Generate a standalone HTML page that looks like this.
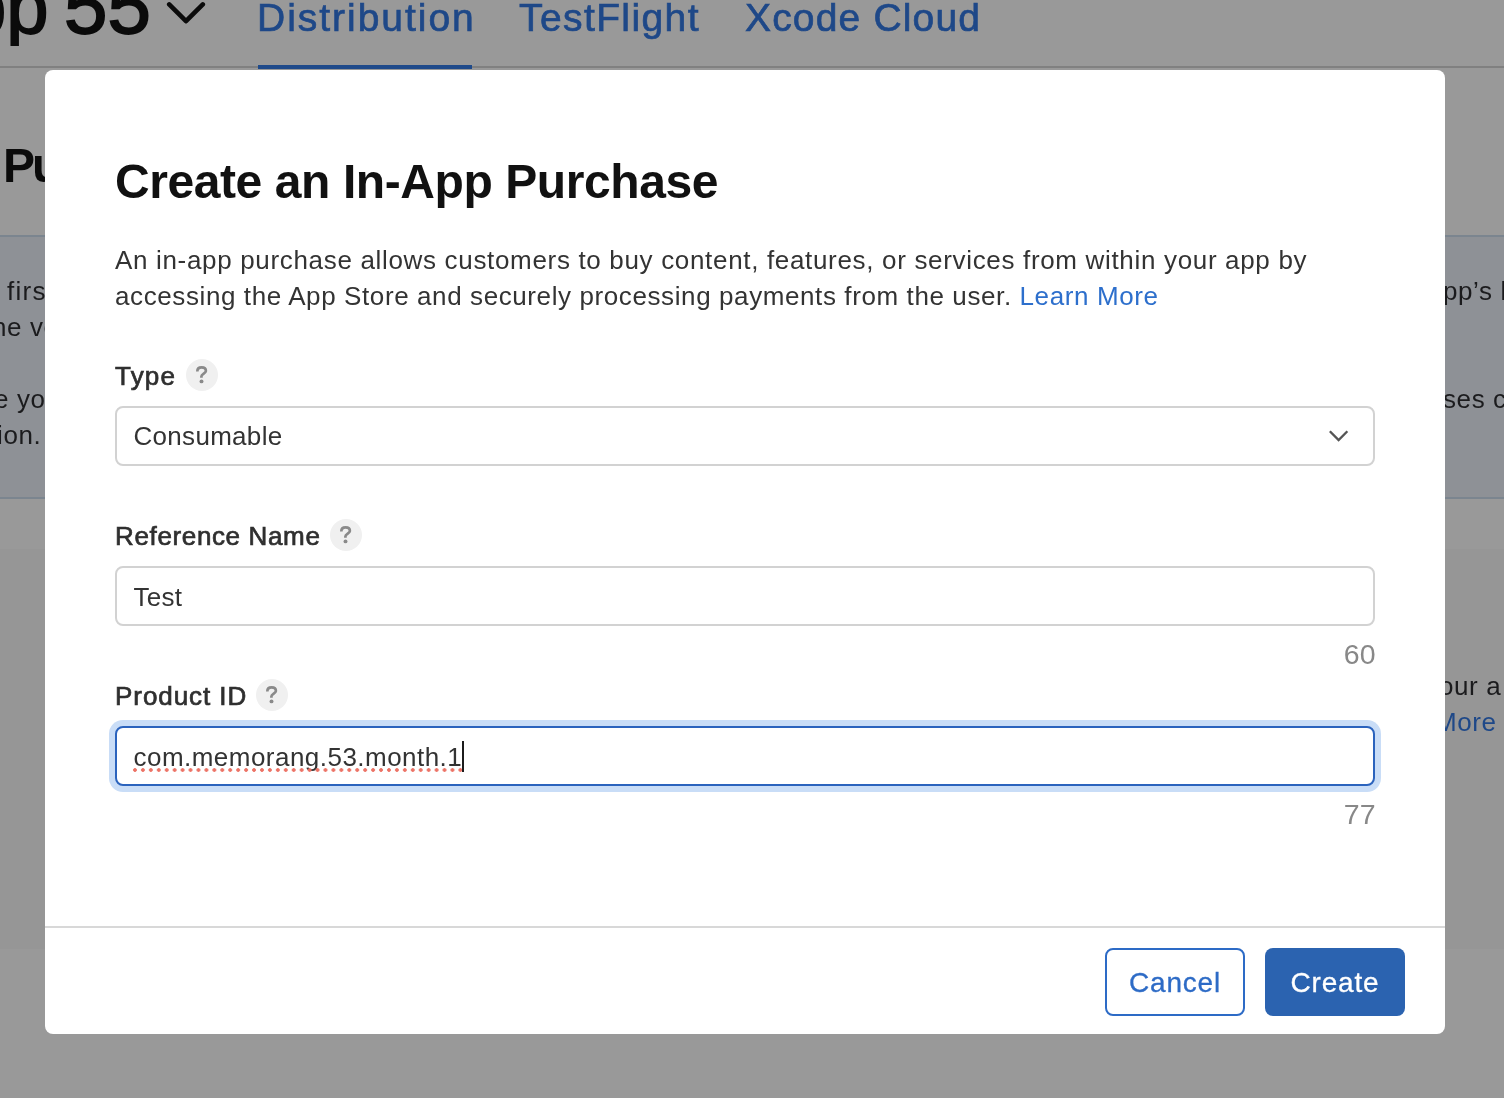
<!DOCTYPE html>
<html>
<head>
<meta charset="utf-8">
<style>
html,body{margin:0;padding:0;}
body{width:1504px;height:1098px;position:relative;overflow:hidden;background:#999999;font-family:"Liberation Sans",sans-serif;-webkit-font-smoothing:antialiased;}
#modal,.abs,.bgtxt{will-change:transform;}
.abs{position:absolute;white-space:nowrap;}
/* background page */
#hdrline{position:absolute;left:0;top:66px;width:1504px;height:2px;background:#808080;}
#info{position:absolute;left:0;top:235px;width:1504px;height:264px;background:#8e9196;border-top:2px solid #7b858f;border-bottom:2px solid #7b858f;box-sizing:border-box;}
#card{position:absolute;left:0;top:549px;width:1504px;height:400px;background:#969696;}
.bgtxt{position:absolute;white-space:nowrap;font-size:26px;line-height:36px;color:#1b1b1d;letter-spacing:0.6px;}
/* modal */
#modal{position:absolute;left:45px;top:70px;width:1400px;height:964px;background:#fff;border-radius:8px;}
.m{position:absolute;white-space:nowrap;}
.title{font-size:48px;font-weight:700;color:#111;letter-spacing:-0.42px;}
.para{font-size:26px;color:#333;letter-spacing:0.6px;line-height:36px;}
.label{font-size:26px;font-weight:400;color:#2f2f2f;-webkit-text-stroke:0.7px #2f2f2f;letter-spacing:0.5px;}
.help{position:absolute;width:32px;height:32px;border-radius:16px;background:#f0f0f0;color:#8c8c8c;font-size:22px;font-weight:400;-webkit-text-stroke:0.8px #8c8c8c;text-align:center;line-height:32px;}
.field{position:absolute;left:70px;width:1260px;height:60px;box-sizing:border-box;border:2px solid #d2d2d2;border-radius:8px;background:#fff;}
.ftxt{position:absolute;left:16.5px;font-size:26px;color:#333;letter-spacing:0.3px;}
.count{position:absolute;right:69px;font-size:28.5px;color:#888888;letter-spacing:0.3px;}
.btn{position:absolute;top:878px;width:140px;height:68px;box-sizing:border-box;border-radius:8px;font-size:28px;text-align:center;letter-spacing:0.8px;-webkit-text-stroke:0.3px currentColor;}
</style>
</head>
<body>
<!-- background page -->
<div class="abs" style="left:0;top:0;width:160px;height:46px;overflow:hidden;"><div class="abs" style="left:-36px;top:-33px;font-size:76px;font-weight:400;-webkit-text-stroke:1.8px #0b0b0b;color:#0b0b0b;line-height:80px;">pp</div><div class="abs" style="left:64px;top:-34px;font-size:78px;font-weight:400;-webkit-text-stroke:1.8px #0b0b0b;color:#0b0b0b;line-height:80px;">55</div></div>

<svg class="abs" style="left:166px;top:0px" width="40" height="26" viewBox="0 0 40 26"><path d="M3.2 4.4 L20 21.2 L36.8 4.4" fill="none" stroke="#0b0b0b" stroke-width="4.6" stroke-linecap="round" stroke-linejoin="round"/></svg>
<div class="abs" style="left:257px;top:-12px;font-size:39px;color:#1e4888;line-height:60px;letter-spacing:1.97px;-webkit-text-stroke:0.7px #1e4888;">Distribution</div>
<div class="abs" style="left:519px;top:-12px;font-size:39px;color:#1e4888;line-height:60px;letter-spacing:1.4px;-webkit-text-stroke:0.7px #1e4888;">TestFlight</div>
<div class="abs" style="left:745px;top:-12px;font-size:39px;color:#1e4888;line-height:60px;letter-spacing:1.17px;-webkit-text-stroke:0.7px #1e4888;">Xcode Cloud</div>
<div id="hdrline"></div>
<div class="abs" style="left:258px;top:65px;width:214px;height:4px;background:#1f4a8a;"></div>
<div class="abs" style="left:3px;top:131px;font-size:48px;font-weight:700;color:#0b0b0b;line-height:70px;letter-spacing:-3px;">Pu</div>
<div id="info"></div>
<div class="bgtxt" style="left:7.2px;top:273px;letter-spacing:1.3px;">firs</div>
<div class="bgtxt" style="left:-8px;top:309px;">ne ve</div>
<div class="bgtxt" style="left:-5.7px;top:381px;">e you</div>
<div class="bgtxt" style="left:-2.6px;top:417px;">ion.</div>
<div class="bgtxt" style="left:1443px;top:273px;">pp’s l</div>
<div class="bgtxt" style="left:1443px;top:381px;">ses c</div>
<div id="card"></div>
<div class="bgtxt" style="left:1439px;top:668px;">our a</div>
<div class="bgtxt" style="left:1435px;top:704px;color:#1e4888;">More</div>

<!-- modal -->
<div id="modal">
  <div class="m title" style="left:70px;top:84px;line-height:56px;">Create an In-App Purchase</div>
  <div class="m para" style="left:70px;top:172px;"><span style="letter-spacing:0.67px">An in-app purchase allows customers to buy content, features, or services from within your app by</span><br>accessing the App Store and securely processing payments from the user. <span style="color:#2d6fcc">Learn More</span></div>
  <div class="m label" style="left:70px;top:288px;line-height:36px;letter-spacing:1.2px;">Type</div>
  <div class="help" style="left:141px;top:289px;"><svg width="32" height="32" viewBox="0 0 32 32" style="display:block"><path d="M11.3 12.4 C11.3 9.6 13.3 8.4 15.6 8.4 C18.3 8.4 19.9 10.0 19.9 12.0 C19.9 14.3 15.4 14.9 15.4 17.4 L15.4 18.8" fill="none" stroke="#8a8a8a" stroke-width="2.7"/><circle cx="15.5" cy="22.4" r="1.95" fill="#8a8a8a"/></svg></div>
  <div class="field" style="top:336px;"><div class="ftxt" style="top:10px;line-height:36px;">Consumable</div>
    <svg style="position:absolute;left:1200px;top:0px" width="40" height="56" viewBox="0 0 40 56"><path d="M12.85 23.25 L21.6 32 L30.35 23.25" fill="none" stroke="#555" stroke-width="2.4" stroke-linecap="butt" stroke-linejoin="miter"/></svg>
  </div>
  <div class="m label" style="left:70px;top:448px;line-height:36px;letter-spacing:0.64px;">Reference Name</div>
  <div class="help" style="left:285px;top:449px;"><svg width="32" height="32" viewBox="0 0 32 32" style="display:block"><path d="M11.3 12.4 C11.3 9.6 13.3 8.4 15.6 8.4 C18.3 8.4 19.9 10.0 19.9 12.0 C19.9 14.3 15.4 14.9 15.4 17.4 L15.4 18.8" fill="none" stroke="#8a8a8a" stroke-width="2.7"/><circle cx="15.5" cy="22.4" r="1.95" fill="#8a8a8a"/></svg></div>
  <div class="field" style="top:496px;"><div class="ftxt" style="top:11px;line-height:36px;">Test</div></div>
  <div class="count" style="top:566px;line-height:36px;">60</div>
  <div class="m label" style="left:70px;top:608px;line-height:36px;letter-spacing:0.94px;">Product ID</div>
  <div class="help" style="left:211px;top:609px;"><svg width="32" height="32" viewBox="0 0 32 32" style="display:block"><path d="M11.3 12.4 C11.3 9.6 13.3 8.4 15.6 8.4 C18.3 8.4 19.9 10.0 19.9 12.0 C19.9 14.3 15.4 14.9 15.4 17.4 L15.4 18.8" fill="none" stroke="#8a8a8a" stroke-width="2.7"/><circle cx="15.5" cy="22.4" r="1.95" fill="#8a8a8a"/></svg></div>
  <div class="field" style="top:656px;border-color:#2b63bd;box-shadow:0 0 0 6px #c9ddf7;"><div class="ftxt" style="top:11px;line-height:36px;letter-spacing:0.47px;">com.memorang.53.month.1</div>
    <div style="position:absolute;left:14px;top:39px;width:333.5px;height:6px;background-image:radial-gradient(circle,#ec7265 1.5px,rgba(236,114,101,0) 2.2px);background-size:7.94px 6px;"></div>
    <div style="position:absolute;left:345px;top:13px;width:2px;height:31px;background:#1c1c1c;"></div>
  </div>
  <div class="count" style="top:726px;line-height:36px;">77</div>
  <div class="m" style="left:0;top:856px;width:1400px;height:2px;background:#d8d8d8;"></div>
  <div class="btn" style="left:1060px;border:2px solid #2d6bc6;color:#2d6bc6;line-height:66px;background:#fff;">Cancel</div>
  <div class="btn" style="left:1220px;background:#2b63b0;color:#fff;line-height:70px;">Create</div>
</div>
</body>
</html>
